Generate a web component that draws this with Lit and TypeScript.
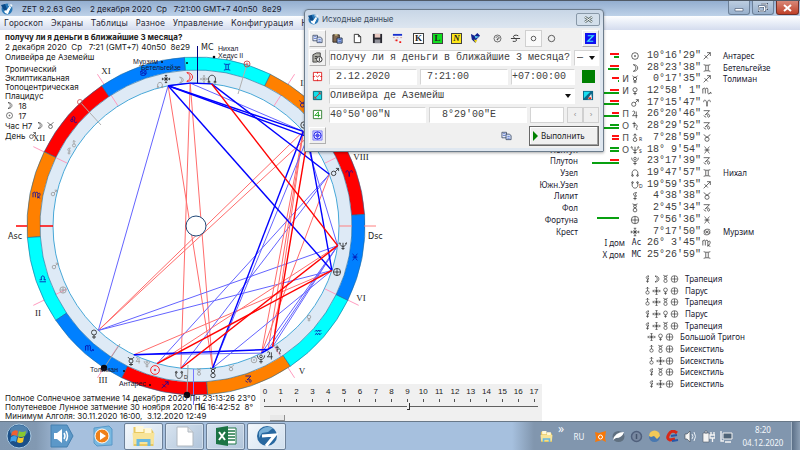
import { LitElement, html, svg, css } from "lit";
import { customElement, state } from "lit/decorators.js";

/* ---------- glyphs, each drawn around 0,0 in a 10 by 10 box ---------- */
const G: Record<string, string> = {
  sun: "M-4 0a4 4 0 1 0 8 0a4 4 0 1 0-8 0M-.7 0a.7.7 0 1 0 1.4 0a.7.7 0 1 0-1.4 0",
  moon: "M-2-4C5-4 5 4-2 4C2 2 2-2-2-4Z",
  mercury: "M-2 0a2 2 0 1 0 4 0a2 2 0 1 0-4 0M-3-4C-2-1.5 2-1.5 3-4M0 2V5M-2 3.5H2",
  venus: "M-2.5-1.5a2.5 2.5 0 1 0 5 0a2.5 2.5 0 1 0-5 0M0 1V5M-2 3H2",
  mars: "M-4 1.5a2.5 2.5 0 1 0 5 0a2.5 2.5 0 1 0-5 0M.3-.3L4-4M1-4H4V-1",
  jupiter: "M-3-3C0-5 1-1-3 2H3M1.5-3V5",
  saturn: "M-3-3H1M-1-5V2M-1 0C2-3 4 0 2 2C1 4 2 5 3 4",
  uranus: "M-2.2 2a2.2 2.2 0 1 0 4.4 0a2.2 2.2 0 1 0-4.4 0M0 0V-5M-2-3L0-5L2-3",
  neptune: "M-4-4C-4 2 4 2 4-4M0-4V5M-2 3H2M-5-3L-4-4L-3-3M3-3L4-4L5-3",
  pluto: "M-1.5-3a1.5 1.5 0 1 0 3 0a1.5 1.5 0 1 0-3 0M-4-4C-4 2 4 2 4-4M0 .5V5M-2 3H2",
  node: "M-3 3C-6-6 6-6 3 3M-4 3a1 1 0 1 0 2 0a1 1 0 1 0-2 0M2 3a1 1 0 1 0 2 0a1 1 0 1 0-2 0",
  snode: "M-3-3C-6 6 6 6 3-3M-4-3a1 1 0 1 0 2 0a1 1 0 1 0-2 0M2-3a1 1 0 1 0 2 0a1 1 0 1 0-2 0",
  lilith: "M2-4C-3-5-3 1 2 0C0-1 0-3 2-4ZM0 0V5M-2 3H2",
  fol: "M-2.2 2.5a2.2 2.2 0 1 0 4.4 0a2.2 2.2 0 1 0-4.4 0M-1.7-2a1.7 1.7 0 1 0 3.4 0a1.7 1.7 0 1 0-3.4 0M-3-5L0-3.6L3-5",
  fortune: "M-4.500 0a4.500 4.500 0 1 0 9 0a4.500 4.500 0 1 0-9 0M-4 0H4M0-4V4",
  cross: "M-4.500 0H4.500M0-4.500V4.500M-1.500-4.500H1.500M-1.500 4.500H1.500M-4.500-1.500V1.500M4.500-1.500V1.500M-2-2L2 2M2-2L-2 2",
  aries: "M-4-1C-4-5 0-5 0 4C0-5 4-5 4-1",
  taurus: "M-2.5 1.5a2.5 2.5 0 1 0 5 0a2.5 2.5 0 1 0-5 0M-4-4C-2-4-2-1 0-1S2-4 4-4",
  gemini: "M-4-4C-2-3 2-3 4-4M-4 4C-2 3 2 3 4 4M-1.5-3V3M1.5-3V3",
  cancer: "M-4-1C-2-4 2-4 4-2M-3.5 0a1.5 1.5 0 1 0 3 0a1.5 1.5 0 1 0-3 0M4 1C2 4-2 4-4 2M.5 0a1.5 1.5 0 1 0 3 0a1.5 1.5 0 1 0-3 0",
  leo: "M-4 1a1.5 1.5 0 1 0 3 0a1.5 1.5 0 1 0-3 0M-1.5 0C-4-5 3-5 1 0C0 3 1 5 4 3",
  virgo: "M-5-3V3M-5-2C-4-4-2-4-2-2V3M-2-2C-1-4 1-4 1-2V3L4 4M1-1C5-5 5 2 0 4",
  libra: "M-4 4H4M-4 1.5H-1.5C-4-5 4-5 1.5 1.5H4",
  scorpio: "M-5-3V3M-5-2C-4-4-2-4-2-2V3M-2-2C-1-4 1-4 1-2V2C1 4 3 4 4 2M3 2.5L4.5 1.5L5 3.5",
  sagittarius: "M-4 4L4-4M0-4H4V0M-3-1L1 3",
  capricorn: "M-4-4H3L-2 1C0-1 4 0 3 3C2 5 0 3 1 1M-4 2L-1 4",
  aquarius: "M-4-1L-2-3L-1-1L1-3L2-1L4-3M-4 3L-2 1L-1 3L1 1L2 3L4 1",
  pisces: "M-3-4C0-2 0 2-3 4M3-4C0-2 0 2 3 4M-3 0H3",
};

const glyph = (name: string, x: number, y: number, color = "#222", size = 1) =>
  svg`<path d=${G[name]} fill="none" stroke=${color} stroke-width=${0.8 / size}
    transform="translate(${x} ${y}) scale(${size})"/>`;

const glyphIcon = (name: string) =>
  html`<svg class="g" viewBox="-6 -6 12 12" aria-hidden="true">${glyph(name, 0, 0)}</svg>`;

/* ---------- chart geometry ---------- */
const CX = 196, CY = 196, ASC = 176.06;
const R_OUT = 169, R_BAND = 156, R_IN = 143;
const at = (lon: number, r: number): [number, number] => {
  const a = ((lon - ASC) * Math.PI) / 180;
  return [CX - r * Math.cos(a), CY + r * Math.sin(a)];
};
const SIGNS = ["aries", "taurus", "gemini", "cancer", "leo", "virgo", "libra", "scorpio",
  "sagittarius", "capricorn", "aquarius", "pisces"];
const ELEMENTS = ["#ff0000", "#ff8000", "#00ffff", "#0080ff"];
const LON: Record<string, number> = {
  sun: 250.27, moon: 88.39, mercury: 240.29, venus: 222.97, mars: 17.26, jupiter: 296.35,
  saturn: 298.5, uranus: 37.48, neptune: 348.17, pluto: 293.29, node: 79.8, snode: 259.99,
  lilith: 34.64, fol: 272.76, fortune: 337.94, cross: 97.3,
};
/* aspect kinds: B/b blue strong/weak, R/r red strong/weak */
const ASPECTS: [string, string, string][] = [
  ["b", "cross", "venus"], ["r", "cross", "fol"], ["r", "moon", "fol"], ["r", "moon", "snode"],
  ["b", "moon", "uranus"], ["r", "venus", "uranus"], ["r", "venus", "lilith"],
  ["b", "mars", "sun"], ["b", "mars", "snode"], ["r", "mars", "pluto"],
  ["b", "neptune", "venus"], ["b", "fortune", "venus"], ["r", "neptune", "sun"],
  ["r", "fortune", "mercury"], ["r", "uranus", "jupiter"], ["r", "uranus", "saturn"],
  ["r", "uranus", "pluto"], ["b", "uranus", "neptune"], ["b", "neptune", "jupiter"],
  ["b", "neptune", "saturn"], ["b", "neptune", "pluto"], ["b", "fortune", "fol"],
  ["b", "mercury", "pluto"], ["b", "lilith", "fol"],
  ["B", "cross", "moon"], ["B", "moon", "node"], ["B", "cross", "uranus"], ["B", "cross", "lilith"],
  ["B", "cross", "fortune"], ["B", "node", "mars"], ["B", "uranus", "fol"],
  ["B", "lilith", "fortune"], ["B", "mercury", "jupiter"], ["B", "pluto", "saturn"],
  ["R", "node", "neptune"], ["R", "neptune", "snode"], ["R", "fortune", "sun"],
  ["R", "lilith", "saturn"],
];
const STROKE: Record<string, [string, number]> = {
  B: ["#0000ff", 1.4], b: ["#6464ff", 1], R: ["#ff0000", 1.4], r: ["#ff6c6c", 1],
};
const PLANETS: [string, number, number, string, number][] = [
  ["cross", 166, 49, "#222", 0.8], ["moon", 189, 47, "#ff0000", 1.1], ["node", 212, 49, "#222", 1],
  ["venus", 94, 304, "#222", 1], ["mercury", 131, 331, "#222", 1], ["sun", 155, 340, "#ff0000", 1.1],
  ["snode", 179, 345, "#222", 0.9], ["fol", 213, 343, "#222", 1], ["pluto", 261, 329, "#222", 0.9],
  ["jupiter", 270, 325, "#222", 0.9], ["saturn", 278, 320, "#222", 0.9], ["mars", 335, 142, "#222", 0.9],
  ["neptune", 343, 216, "#222", 0.8], ["fortune", 337, 242, "#222", 0.8], ["sun", 304, 95, "#222", 0.8],
];
const TRANSITS: [string, number, number][] = [
  ["node", 160, 55], ["moon", 181, 50], ["cross", 204, 49], ["uranus", 74, 114], ["lilith", 69, 121],
  ["mars", 54, 163], ["mars", 55, 236], ["fortune", 63, 260], ["jupiter", 138, 330], ["pluto", 147, 334],
  ["sun", 254, 330], ["fol", 199, 342], ["taurus", 231, 338], ["venus", 309, 288],
];
const HOUSES: [number, string, number, number][] = [
  [-57, "XI", 106, 44], [-26, "XII", 39, 111], [26, "II", 38, 286], [57, "III", 103, 353],
  [123, "V", 302, 344], [154, "VI", 361, 271], [-154, "VIII", 361, 130], [-123, "IX", 305, 56],
];

const sector = (i: number) => {
  const p = (l: number, r: number) => at(l, r).map((n) => n.toFixed(2)).join(" ");
  const a = i * 30, b = a + 30;
  return `M${p(a, R_OUT)}A${R_OUT} ${R_OUT} 0 0 0 ${p(b, R_OUT)}L${p(b, R_BAND)}A${R_BAND} ${R_BAND} 0 0 1 ${p(a, R_BAND)}Z`;
};

@customElement("zodiac-wheel")
class ZodiacWheel extends LitElement {
  static styles = css`
    :host { display: block; }
    .wheel { display: block; width: 400px; height: 391px; }
    .star { font: 7px "Liberation Sans", Arial, sans-serif; fill: #181830; }
    .house { font: 9px "Liberation Serif", serif; fill: #222; text-anchor: middle; }
    .angle { font: 8px "DejaVu Sans", Verdana, sans-serif; fill: #222; }
    .retro { font: 5px "Liberation Sans", sans-serif; fill: #222; }
  `;

  render() {
    const line = (x1: number, y1: number, x2: number, y2: number, c: string, w = 1) =>
      svg`<line x1=${x1} y1=${y1} x2=${x2} y2=${y2} stroke=${c} stroke-width=${w}/>`;
    return html`<svg class="wheel" viewBox="0 0 400 391" role="img" aria-label="Гороскоп">
      <circle cx=${CX} cy=${CY} r="149.5" fill="none" stroke="#deeaf6" stroke-width="13"/>
      ${HOUSES.map(([d]) => {
        const [x1, y1] = at(ASC + d, 181), [x2, y2] = at(ASC + d, R_IN);
        return line(x1, y1, x2, y2, "#ff9cc0");
      })}
      ${SIGNS.map((_, i) => svg`<path d=${sector(i)} fill=${ELEMENTS[i % 4]} stroke="#206898" stroke-width="0.6"/>`)}
      <circle cx=${CX} cy=${CY} r=${R_IN} fill="none" stroke="#48a8d8"/>
      ${SIGNS.map((s, i) => { const [x, y] = at(i * 30 + 15, 162); return glyph(s, x, y, "#0808a8", 0.8); })}
      ${line(16, 196, 27, 196, "#ff0000", 1.5)}${line(40, 196, 53, 196, "#ff0000", 1.5)}
      ${line(339, 196, 352, 196, "#ff8080")}${line(364, 196, 376, 196, "#ff8080")}
      ${line(197.5, 16, 197.5, 53, "#000080")}${line(193.5, 339, 193.5, 375, "#7878ff")}
      ${line(247, 34, 238, 64, "#b0b0b0")}${line(80, 72, 101, 95, "#b0b0b0")}
      ${line(120, 314, 104, 338, "#a0a0a0")}${line(188, 335, 187, 365, "#a0a0a0")}
      ${ASPECTS.map(([k, a, b]) => {
        const [x1, y1] = at(LON[a], R_IN), [x2, y2] = at(LON[b], R_IN);
        return line(x1, y1, x2, y2, ...STROKE[k]);
      })}
      <circle cx=${CX} cy=${CY} r="10" fill="#fff" stroke="#204878"/>
      ${TRANSITS.map(([n, x, y]) => glyph(n, x, y, "#989898", 0.7))}
      ${PLANETS.map(([n, x, y, c, s]) => glyph(n, x, y, c, s))}
      <circle cx="247" cy="34" r="3" fill="none" stroke="#c83030" stroke-width="0.8"/>
      <circle cx="247" cy="34" r="1" fill="none" stroke="#c83030" stroke-width="0.6"/>
      <circle cx="80" cy="72" r="2.5" fill="none" stroke="#c83030" stroke-width="0.7"/>
      ${[[162, 32, 1], [187, 33, 1], [214, 27, 1.3], [124, 341, 1], [150, 355, 1], [104, 338, 3.2], [187, 365, 3.2]]
        .map(([x, y, r]) => svg`<circle cx=${x} cy=${y} r=${r} fill="#080810"/>`)}
      <text class="star" x="133" y="34">Мурзим</text>
      <text class="star" x="141" y="40">Бетельгейзе</text>
      <text class="star" x="218" y="21">Нихал</text>
      <text class="star" x="218" y="28">Хедус II</text>
      <text class="star" x="90" y="342">Толиман</text>
      <text class="star" x="119" y="356">Антарес</text>
      ${HOUSES.map(([, t, x, y]) => svg`<text class="house" x=${x} y=${y}>${t}</text>`)}
      <text class="angle" x="8" y="209">Asc</text>
      <text class="angle" x="368" y="209">Dsc</text>
      <text class="angle" x="201" y="20">MC</text>
      <text class="angle" x="198" y="380">IC</text>
      <text class="retro" x="184" y="349">D</text>
    </svg>`;
  }
}

/* ---------- planet table ---------- */
type Bar = [string, number];
interface Row { name: string; g?: string; mark?: string; sub?: string; deg: string; sign: string; star?: string; bars?: [Bar, Bar]; dig?: string; }
const r = (n: number): Bar => ["red", n];
const g = (n: number): Bar => ["green", n];
const ROWS: Row[] = [
  { name: "Солнце", g: "sun", deg: `10°16'29"`, sign: "sagittarius", star: "Антарес", bars: [r(9), g(5)] },
  { name: "Луна", g: "moon", deg: `28°23'38"`, sign: "gemini", star: "Бетельгейзе", bars: [r(9), g(11)] },
  { name: "Меркурий", g: "mercury", deg: `0°17'35"`, sign: "sagittarius", star: "Толиман", bars: [r(7), g(1)], dig: "И" },
  { name: "Венера", g: "venus", deg: `12°58' 1"`, sign: "scorpio", bars: [r(9), g(20)], dig: "И" },
  { name: "Марс", g: "mars", deg: `17°15'47"`, sign: "aries", bars: [r(9), g(20)] },
  { name: "Юпитер", g: "jupiter", deg: `26°20'46"`, sign: "capricorn", bars: [r(7), g(20)], dig: "П" },
  { name: "Сатурн", g: "saturn", deg: `28°29'52"`, sign: "capricorn", bars: [g(9), g(20)], dig: "О" },
  { name: "Уран", g: "uranus", sub: "R", deg: `7°28'59"`, sign: "taurus", bars: [r(7), r(7)], dig: "П" },
  { name: "Нептун", g: "neptune", sub: "S", deg: `18° 9'54"`, sign: "pisces", bars: [g(9), g(9)], dig: "О" },
  { name: "Плутон", g: "pluto", deg: `23°17'39"`, sign: "capricorn", bars: [r(9), g(27)] },
  { name: "Узел", g: "node", deg: `19°47'57"`, sign: "gemini", star: "Нихал" },
  { name: "Южн.Узел", g: "snode", sub: "D", deg: `19°59'35"`, sign: "sagittarius" },
  { name: "Лилит", g: "lilith", deg: `4°38'38"`, sign: "taurus" },
  { name: "Фол", g: "fol", deg: `2°45'34"`, sign: "capricorn" },
  { name: "Фортуна", g: "fortune", deg: `7°56'36"`, sign: "pisces", bars: [g(22), g(0)] },
  { name: "Крест", g: "cross", deg: `7°17'50"`, sign: "cancer", star: "Мурзим" },
  { name: "I дом", mark: "Ac", deg: `26° 3'45"`, sign: "virgo" },
  { name: "X дом", mark: "MC", deg: `25°26'59"`, sign: "gemini" },
];
const FIGURES: [string[], string][] = [
  [["lilith", "moon", "fol", "fortune"], "Трапеция"],
  [["uranus", "cross", "venus", "fortune"], "Парус"],
  [["uranus", "cross", "fol", "fortune"], "Трапеция"],
  [["lilith", "cross", "venus", "fortune"], "Парус"],
  [["lilith", "cross", "fol", "fortune"], "Трапеция"],
  [["cross", "venus", "fortune"], "Большой Тригон"],
  [["uranus", "fol", "fortune"], "Бисекстиль"],
  [["uranus", "cross", "fortune"], "Бисекстиль"],
  [["lilith", "fol", "fortune"], "Бисекстиль"],
  [["lilith", "cross", "fortune"], "Бисекстиль"],
];

@customElement("planet-table")
class PlanetTable extends LitElement {
  static styles = css`
    :host { display: block; font: 8px/10px "Noto Sans", Tahoma, sans-serif; color: #202030; }
    table { border-collapse: collapse; table-layout: fixed; width: 272px; height: 211px; }
    th, td { padding: 0; font-weight: normal; text-align: right; white-space: nowrap; vertical-align: middle; line-height: 10px; }
    .c-name { width: 50px; } .c-bars { width: 41px; } .c-dig { width: 10px; }
    .c-glyph { width: 15px; } .c-deg { width: 57px; } .c-sign { width: 14px; }
    .house { padding-right: 4px; }
    .bars { display: flex; flex-direction: column; align-items: flex-end; gap: 1px; }
    .bar { height: 2px; }
    .bar.red { background: #ff1010; }
    .bar.green { background: #08a010; }
    .dig { font: 9px/10px "DejaVu Sans", sans-serif; color: #505050; }
    .mark { font: 8px/10px "DejaVu Sans Mono", monospace; text-align: center; }
    .cell { display: flex; align-items: center; padding-left: 1px; }
    .sub { font-size: 5px; margin: 3px 0 0 -1px; line-height: 5px; }
    .deg { font: 10px/10px "Liberation Mono", monospace; white-space: pre; color: #404040; }
    .star { text-align: left; padding-left: 8px; }
    .g { width: 10px; height: 10px; display: block; flex: none; }
    .figures { list-style: none; margin: 12px 0 0; padding: 0 0 0 115px; display: grid; grid-auto-rows: 1fr; height: 117px; }
    .figures .g { width: 9px; }
    .figure { display: flex; align-items: center; }
    .figure.three { padding-left: 4px; }
    .label { padding-left: 6px; white-space: nowrap; }
  `;

  render() {
    return html`
      <table>
        <colgroup><col class="c-name"><col class="c-bars"><col class="c-dig"><col class="c-glyph"><col class="c-deg"><col class="c-sign"><col></colgroup>
        <tbody>
          ${ROWS.map((p) => html`<tr>
            ${p.mark ? html`<th class="house" scope="row" colspan="3">${p.name}</th>` : html`
              <th scope="row">${p.name}</th>
              <td><div class="bars">${(p.bars ?? []).map(([c, w]) => html`<div class="bar ${c}" style="width:${w}px"></div>`)}</div></td>
              <td class="dig">${p.dig}</td>`}
            <td>${p.mark ? html`<div class="mark">${p.mark}</div>` : html`<div class="cell">${glyphIcon(p.g!)}${p.sub ? html`<span class="sub">${p.sub}</span>` : ""}</div>`}</td>
            <td class="deg">${p.deg}</td>
            <td><div class="cell">${glyphIcon(p.sign)}</div></td>
            <td class="star">${p.star}</td>
          </tr>`)}
        </tbody>
      </table>
      <ul class="figures">
        ${FIGURES.map(([gs, t]) => html`<li class="figure ${gs.length === 3 ? "three" : ""}">${gs.map(glyphIcon)}<span class="label">${t}</span></li>`)}
      </ul>`;
  }
}

/* ---------- pictures for the dialog and the taskbar ---------- */
const logo = html`<svg class="ico" viewBox="0 0 12 12" aria-hidden="true"><circle cx="6" cy="6" r="5.5" fill="#2878b8"/><path d="M1 3L5 8L10 1L7 11L4 10Z" fill="#fff"/><path d="M0 2L4 1L6 6L3 8Z" fill="#0c4a88"/><path d="M7 2H11L6 11" fill="none" stroke="#fff"/></svg>`;
const ic = (body: unknown) => html`<svg class="ico" viewBox="0 0 12 12" aria-hidden="true">${body}</svg>`;
const I = {
  copy: ic(svg`<path d="M1 2.500H6V8.500H1Z" fill="#e8eef8" stroke="#283858" stroke-width=".8"/><path d="M2 4H5M2 6H5" stroke="#3050c0" stroke-width=".7"/><path d="M5.500 4.500H9L11 6V10.500H5.500Z" fill="#d8e4f8" stroke="#283858" stroke-width=".8"/><path d="M7 7H9.500M7 9H9.500" stroke="#3050c0" stroke-width=".7"/>`),
  paste: ic(svg`<path d="M1 2H8V10H1Z" fill="#806850" stroke="#302820"/><path d="M3 1H6V3H3Z" fill="#c0b080"/><path d="M5.500 5.500H11V11H5.500Z" fill="#b0c8f0" stroke="#182848"/><path d="M7 7H10M7 9H10" stroke="#3050c0"/>`),
  page: ic(svg`<path d="M2.500 1.500H7L9.500 4V10.500H2.500ZM7 1.500V4H9.500" fill="#fff" stroke="#303030"/>`),
  save: ic(svg`<path d="M1 1H11V11H1Z" fill="#282830"/><path d="M3 1H9V5H3Z" fill="#e8c8c0"/><path d="M3 7H9V11H3Z" fill="#909098"/>`),
  cal: ic(svg`<path d="M1 2H11" stroke="#1830d0" stroke-width="2"/><path d="M1 5H3M5 5H7M9 5H11M3 8H5" stroke="#d0a0a0"/><path d="M4 7H6V9H4ZM8 9H10V11H8Z" fill="#f01818"/>`),
  doc: ic(svg`<path d="M1 3L5 1H9V9L5 11H1Z" fill="#b0b0a8" stroke="#404040"/><circle cx="8" cy="8" r="3" fill="#fff" stroke="#202020"/><path d="M8 6V10" stroke="#202020"/><path d="M3 5H6M3 7H5" stroke="#303030"/>`),
  date: ic(svg`<path d="M1.500 1.500H10.500V10.500H1.500Z" fill="#fff" stroke="#e02020"/><path d="M6 1V3M6 9V11M1 6H3M9 6H11M4 5L6 6.500L8.500 4.500" stroke="#e02020" fill="none"/>`),
  geo: ic(svg`<path d="M1.500 1.500H10.500V10.500H1.500Z" fill="#10e0e8" stroke="#086070"/><path d="M3 9L9 3M3 7V9H5M7 3H9V5" stroke="#d03030" fill="none"/>`),
  coord: ic(svg`<path d="M1.500 1.500H10.500V10.500H1.500Z" fill="#fff" stroke="#308030"/><path d="M3 7L7 3V9M3 7H9" stroke="#18a018" fill="none"/>`),
  map: ic(svg`<path d="M0 1H11V11H0Z" fill="#0c6888"/><path d="M1 2H8L1 9Z" fill="#18e0f0"/><path d="M5 10L9 4L10 10Z" fill="#f0f0f0"/><path d="M6 8H9V10H6Z" fill="#e02818"/>`),
  wheel: ic(svg`<path d="M1 1H11V11H1Z" fill="#d8d8ff" stroke="#5050f8" stroke-width=".7"/><circle cx="6" cy="6" r="4" fill="none" stroke="#2020e8"/><circle cx="6" cy="6" r="1.500" fill="none" stroke="#2020e8"/><path d="M2 6H10M6 2V10" stroke="#2020e8" stroke-width=".5"/>`),
  bird: ic(svg`<path d="M1 1L5 3L8 0L11 3L7 7L6 11L2 7Z" fill="#102090"/><path d="M5 3L10 4L6 6Z" fill="#58c8e8"/><path d="M4 7L6 11L8 8Z" fill="#e8d018"/>`),
  r1: ic(svg`<circle cx="6" cy="6" r="3.800" fill="none" stroke="#404040" stroke-width=".8"/><path d="M4 5Q6 3 8 5Q8 7 5 7M6 6V8" fill="none" stroke="#404040" stroke-width=".8"/>`),
  r2: ic(svg`<path d="M9 3C5 1 2 4 5 5.500S8 10 3 9M1 6H11" fill="none" stroke="#303030"/>`),
  r3: ic(svg`<circle cx="6" cy="6" r="2.500" fill="none" stroke="#505050"/>`),
  r4: ic(svg`<circle cx="6" cy="6" r="3.500" fill="none" stroke="#505050"/>`),
  z: ic(svg`<path d="M0 0H12V12H0Z" fill="#1010f0"/><path d="M3 3H9L3 9H9" fill="none" stroke="#40e8f8" stroke-width="1.300"/>`),
};

@customElement("source-dialog")
class SourceDialog extends LitElement {
  static styles = css`
    :host { display: block; box-sizing: border-box; border: 1px solid #6c7c8c; border-radius: 4px 4px 1px 1px;
      background: linear-gradient(#c8d6e6, #dde6f0 18px, #dfe7f0); padding: 0 3px 3px; box-shadow: 0 1px 3px #0005;
      font: 8px/10px "Liberation Sans", Arial, sans-serif; color: #202020; }
    .bar { display: flex; align-items: center; height: 18px; gap: 3px; font: 8px/12px Inter, sans-serif; color: #3c4c60; }
    .ico { display: block; width: 11px; height: 11px; flex: none; }
    button, input, select { font: inherit; color: inherit; margin: 0; padding: 0; box-sizing: border-box; border-radius: 0; min-width: 0; }
    .close { margin-left: auto; width: 24px; height: 13px; border: 1px solid #8898a8; border-radius: 2px; background: #d3dfeb; display: grid; place-items: center; }
    .face { background: #f0f0f0; padding: 1px 1px 2px; display: flex; flex-direction: column; gap: 2px; }
    .row { display: flex; align-items: center; gap: 3px; height: 17px; }
    .tools { height: 18px; }
    .set { display: flex; gap: 3px; }
    .mid { gap: 2px; padding-left: 1px; }
    .tight { gap: 1px; padding-left: 2px; }
    .last { margin-left: auto; }
    .tool { border: 0; background: none; width: 17px; height: 17px; display: grid; place-items: center; flex: none; }
    .raised { border: 1px solid; border-color: #fff #b0b0b0 #b0b0b0 #fff; }
    .on { background: #fafafa; border: 1px solid #d0d0d0; }
    .letter { width: 11px; height: 11px; box-sizing: border-box; font: bold 9px/9px "Liberation Serif", serif; border: 1px solid #404040; text-align: center; }
    .k { background: #fff; } .l { background: #10e020; } .n { background: #ffe818; font-style: italic; }
    .field { border: 1px solid; border-color: #d4d4d4 #fff #fff #d4d4d4; background: #fff; height: 16px; flex: 1 1 0; padding: 0;
      font: 10px/14px "Liberation Mono", monospace; color: #404040; outline: 0; white-space: pre; }
    .combo { position: relative; display: flex; flex: 1 1 0; }
    .combo::after { content: ""; position: absolute; right: 4px; top: 6px; border: 3px solid transparent; border-top: 4px solid #101010; border-bottom: 0; pointer-events: none; }
    .sheet { appearance: none; }
    .kind { padding-left: 2px; }
    .wide { flex: 0 0 242px; }
    .lat { flex: 0 0 97px; }
    .slim { flex: 0 0 34px; border-color: #d4d4d4; }
    .zone { flex: 0 0 64px; }
    .end { flex: 0 0 21px; display: grid; place-items: center; }
    .swatch { width: 13px; height: 13px; background: #008000; border: 0; }
    .steps { display: flex; }
    .step { width: 16px; height: 16px; border: 1px solid #d0d0d0; background: #f0f0f0; color: #909090; }
    .foot { height: 21px; gap: 14px; }
    .second { margin-left: auto; }
    .run { display: flex; align-items: center; gap: 3px; width: 70px; height: 20px; padding: 0 3px;
      border: 1px solid #686868; box-shadow: inset -1px -1px #a0a0a0, inset 1px 1px #fff; background: #f0f0f0; font: 8px/10px "Noto Sans", sans-serif; }
    .play { width: 0; height: 0; border: 5px solid transparent; border-left-color: #008000; border-right: 0; }
  `;

  render() {
    const tool = (label: string, body: unknown, cls = "") =>
      html`<button class="tool ${cls}" aria-label=${label}>${body}</button>`;
    return html`
      <div class="bar">${logo}<span>Исходные данные</span>
        <button class="close" aria-label="Закрыть"><svg width="9" height="7" viewBox="0 0 9 7"><path d="M1 1L8 6M8 1L1 6" stroke="#566" stroke-width="2.400"/><path d="M1 1L8 6M8 1L1 6" stroke="#fff"/></svg></button>
      </div>
      <div class="face">
        <div class="row tools">
          <div class="set">${tool("Копировать", I.copy, "raised")}${tool("Вставить", I.paste)}${tool("Новый", I.page)}${tool("Сохранить", I.save)}${tool("Календарь", I.cal)}</div>
          <div class="set mid">${tool("K", html`<span class="letter k">K</span>`)}${tool("L", html`<span class="letter l">L</span>`)}${tool("N", html`<span class="letter n">N</span>`)}${tool("Атлас", I.bird)}</div>
          <div class="set tight">${tool("Режим 1", I.r1)}${tool("Режим 2", I.r2)}${tool("Режим 3", I.r3, "on")}${tool("Режим 4", I.r4)}</div>
          <div class="set last">${tool("ZET", I.z, "raised")}</div>
        </div>
        <div class="row">
          ${tool("Список", I.doc, "raised")}
          <input class="field wide" aria-label="Название" value="получу ли я деньги в ближайшие 3 месяца?">
          <span class="combo"><select class="field sheet kind" aria-label="Пол"><option>—</option></select></span>
        </div>
        <div class="row">
          ${tool("Дата", I.date)}
          <input class="field" aria-label="Дата" value=" 2.12.2020">
          <input class="field" aria-label="Время" value=" 7:21:00">
          <input class="field zone" aria-label="Пояс" value="+07:00:00">
          <span class="end"><button class="swatch" aria-label="Цвет"></button></span>
        </div>
        <div class="row">
          ${tool("Город", I.geo)}
          <span class="combo"><select class="field sheet" aria-label="Место"><option>Оливейра де Аземейш</option></select></span>
          <span class="end">${I.map}</span>
        </div>
        <div class="row">
          ${tool("Координаты", I.coord)}
          <input class="field lat" aria-label="Широта" value="40°50'00&quot;N">
          <input class="field" aria-label="Долгота" value="  8°29'00&quot;E">
          <input class="field slim" aria-label="Высота">
          <span class="steps"><button class="step" aria-label="Назад">‹</button><button class="step" aria-label="Вперёд">›</button></span>
        </div>
        <div class="row foot">
          ${tool("Карта", I.wheel, "raised")}
          ${tool("Копировать данные", I.copy, "second")}
          <button class="run"><span class="play"></span>Выполнить</button>
        </div>
      </div>`;
  }
}

/* ---------- taskbar ---------- */
const folder = svg`<path d="M2 3H9L11 5H20L22 8V22H2Z" fill="#e8c860"/><path d="M4 2H12V8H4ZM13 4H20V10H13Z" fill="#fff8d8"/><path d="M1 9H23L22 20H2Z" fill="#f8e498"/><path d="M5 22V15H19V22H16V18H8V22Z" fill="#68b8e0"/>`;

@customElement("task-bar")
class TaskBar extends LitElement {
  static styles = css`
    :host { display: flex; align-items: center; height: 29px; box-sizing: border-box; border-top: 1px solid #687888;
      background: linear-gradient(90deg, #8097b0, #8299b2 36px, #a6c0de 66px, #a6c0de calc(100% - 288px), #8196ae calc(100% - 266px), #8196ae);
      color: #f4f8fc; font: 8px/13px "Noto Sans", "Open Sans", sans-serif; }
    button { border: 0; background: none; padding: 0; margin: 0; display: grid; place-items: center; color: inherit; font: inherit; }
    .orb { width: 38px; height: 28px; margin-right: 4px; }
    .app { width: 39px; height: 27px; margin-right: 2px; box-sizing: border-box; flex: none; }
    .open { border: 1px solid #6c8098; border-radius: 2px; background: linear-gradient(135deg, #d8e4f0, #b0c4da); box-shadow: inset 0 0 0 1px #e4eef888; }
    .active { background: linear-gradient(135deg, #f4f8fc, #d0dfee); }
    .tray { margin-left: auto; display: flex; align-items: center; height: 100%; }
    .small { width: 18px; }
    .lang { width: 24px; text-align: center; }
    .clock { width: 56px; text-align: center; }
    .peek { width: 9px; height: 28px; background: linear-gradient(90deg, #5c7088, #8c9fb4); border-left: 1px solid #a8b8c8; }
    .more { width: 12px; align-self: flex-start; font-size: 12px; text-align: center; }
  `;

  render() {
    const t = (label: string, body: unknown) => html`<button class="small" aria-label=${label}><svg width="13" height="13" viewBox="0 0 13 13">${body}</svg></button>`;
    return html`
      <button class="orb" aria-label="Пуск"><svg width="26" height="26" viewBox="0 0 26 26">
        <circle cx="13" cy="13" r="12" fill="#1c5088" stroke="#a8c8e0"/><ellipse cx="13" cy="8" rx="9" ry="6" fill="#6898c0" opacity=".7"/>
        <path d="M6 9Q9 6 12 8L11 13Q8 11 5 13Z" fill="#f06030"/><path d="M13 8Q16 10 20 8L19 13Q15 15 12 13Z" fill="#88c830"/>
        <path d="M5 14Q8 12 11 14L10 19Q7 17 4 19Z" fill="#40a0e8"/><path d="M12 14Q15 16 18 14L17 19Q14 21 11 19Z" fill="#f8c828"/></svg></button>
      <button class="app" aria-label="Звук"><svg width="24" height="24" viewBox="0 0 24 24"><path d="M1 1H17L23 12L17 23H1Z" fill="#5c98c8" stroke="#4480b0"/><path d="M4 9H7L12 5V19L7 15H4Z" fill="#fff"/><path d="M14 9Q16 12 14 15M16 7Q19 12 16 17" fill="none" stroke="#fff" stroke-width="1.500"/></svg></button>
      <button class="app" aria-label="Проигрыватель"><svg width="20" height="22" viewBox="0 0 20 22"><path d="M1 3L16 1L19 4V20L4 21L1 18Z" fill="#78b8e0" stroke="#5898c8"/><circle cx="9" cy="11" r="7" fill="#f08018" stroke="#fff"/><path d="M7 7L13 11L7 15Z" fill="#fff"/></svg></button>
      <button class="app open active" aria-label="Проводник"><svg width="25" height="24" viewBox="0 0 24 24">${folder}</svg></button>
      <button class="app open" aria-label="Документ"><svg width="18" height="21" viewBox="0 0 18 21"><path d="M1 1H12L17 6V20H1Z" fill="#fff" stroke="#b0b8c0"/><path d="M12 1V6H17" fill="#e0e4e8" stroke="#b0b8c0"/></svg></button>
      <button class="app open" aria-label="Excel"><svg width="22" height="22" viewBox="0 0 22 22"><path d="M12 3H21V19H12Z" fill="#fff" stroke="#207848"/><path d="M13 6H20M13 9H20M13 12H20M13 15H20" stroke="#207848" stroke-width="1.500"/><path d="M1 3L13 1V21L1 19Z" fill="#1c7444"/><path d="M4 7L10 15M10 7L4 15" stroke="#fff" stroke-width="2"/></svg></button>
      <button class="app open active" aria-label="ZET"><svg width="24" height="24" viewBox="0 0 24 24"><circle cx="12" cy="12" r="10" fill="#2868a0"/><path d="M4 8Q9 1 18 4L13 8L7 9L4 14Z" fill="#78b0d8"/><path d="M7 12L20 11L11 22" fill="none" stroke="#fff" stroke-width="3"/></svg></button>
      <div class="tray">
        <button class="small" aria-label="Папка"><svg width="13" height="13" viewBox="0 0 24 24">${folder}</svg></button>
        <span class="more">»</span>
        <span class="lang">RU</span>
        ${t("Avast", svg`<path d="M1 2L5 3L12 1L11 8L12 12L8 10L1 12L2 8Z" fill="#f87808"/><circle cx="6.500" cy="7" r="2" fill="none" stroke="#fff"/>`)}
        ${t("Перо", svg`<ellipse cx="6.500" cy="6.500" rx="6" ry="5.500" fill="#607080"/><path d="M1 10Q3 2 12 2Q10 8 4 8Z" fill="#fff"/>`)}
        ${t("Сеть", svg`<circle cx="6.500" cy="6.500" r="5" fill="#7888a0" stroke="#50607c" stroke-width="1.500"/><path d="M6.500 4V9" stroke="#44546c" stroke-width="1.500"/>`)}
        ${t("Погода", svg`<circle cx="6.500" cy="6.500" r="5.500" fill="#4878b0"/><path d="M1 6A5.500 5.500 0 0 1 12 6L9 9L6 6L3 7Z" fill="#f0c858"/>`)}
        ${t("CCleaner", svg`<path d="M11 3Q6-1 3 4T4 10L9 9" fill="none" stroke="#d82818" stroke-width="3"/><path d="M5 6L11 5M6 11L12 10" stroke="#2858a8" stroke-width="2"/>`)}
        ${t("Громкость", svg`<path d="M1 4H3L6 1V12L3 9H1Z" fill="#f4f4f4" stroke="#404850" stroke-width=".6"/><path d="M8 4Q10 6.500 8 9M10 2Q13 6.500 10 11" fill="none" stroke="#e8eef4"/>`)}
        ${t("Питание", svg`<path d="M1 3H7V12H1ZM3 1H5V3H3Z" fill="#f4f4f4" stroke="#505c68" stroke-width=".6"/><path d="M9 2V5M12 2V5M8 5H13V8H8ZM10.500 8V12" fill="none" stroke="#f4f4f4" stroke-width="1.300"/>`)}
        ${t("Экран", svg`<path d="M3 3H12V9H3Z" fill="#506478" stroke="#f4f4f4"/><path d="M5 12H11M1 1V11H4" fill="none" stroke="#f4f4f4" stroke-width="1.300"/>`)}
        <div class="clock">8:20<br>04.12.2020</div>
        <button class="peek" aria-label="Показать рабочий стол"></button>
      </div>`;
  }
}

/* ---------- main window ---------- */
@customElement("app-root")
class AppRoot extends LitElement {
  @state() private hour = 9;

  static styles = css`
    :host { display: flex; flex-direction: column; min-height: 100vh; position: relative; overflow: hidden; background: #fff;
      font: 8px/9px Inter, Verdana, sans-serif; color: #202020; }
    .title { display: flex; align-items: center; height: 16px; box-sizing: border-box; border-top: 1px solid #505a66; padding-left: 1px;
      background: linear-gradient(#93aed0, #bdd1e8); font: 8px/12px Inter, sans-serif; color: #182030; white-space: pre; }
    .ico { width: 12px; height: 12px; }
    .name { padding-left: 9px; }
    .controls { margin-left: auto; display: flex; gap: 2px; align-self: flex-start; padding-right: 1px; white-space: normal; }
    .ctl { width: 22px; height: 14px; padding: 0; border: 1px solid #6c8098; border-top: 0; border-radius: 0 0 3px 3px; background: linear-gradient(#bccde0, #98b0cc); display: grid; place-items: center; }
    .ctl.x { background: linear-gradient(#d88878, #c04028); border-color: #703028; width: 23px; }
    .menu { display: flex; height: 14px; padding-left: 4px; gap: 8px; background: linear-gradient(#fdfeff, #e8edf7 50%, #d4dcee); font: 8px/15px "DejaVu Sans", sans-serif; }
    .menu a { color: #282838; text-decoration: none; white-space: nowrap; }
    .main { flex: 1; display: flex; justify-content: space-between; position: relative; }
    .left { flex: 1; min-width: 0; display: flex; flex-direction: column; position: relative; }
    .chart { position: absolute; left: 0; top: 0; }
    .info { position: relative; padding: 3px 5px 0; }
    .info p { margin: 0; white-space: pre; }
    .head { display: grid; grid-auto-rows: 1fr; height: 29px; align-items: center; }
    .opts { display: grid; grid-auto-rows: 1fr; height: 75px; align-items: center; margin-top: 3px; }
    .g { width: 9px; height: 9px; vertical-align: -1px; }
    .bottom { position: relative; margin-top: auto; display: flex; align-items: flex-end; }
    .notes { width: 255px; padding-left: 5px; white-space: pre; flex: none; }
    .notes p { margin: 0; }
    .scale { width: 282px; height: 37px; background: #f0f0f0; overflow: hidden; flex: none; }
    .hours { display: grid; grid-template-columns: repeat(18, 1fr); width: 285px; margin: 3px 0 0 -3px; font: 8px/10px "Liberation Sans", Arial, sans-serif; text-align: center; }
    .hours span::after { content: ""; display: block; width: 1px; height: 3px; margin: 2px auto 0; background: #505050; }
    .range { appearance: none; display: block; width: 274px; height: 8px; margin: 0 0 0 4px; background: linear-gradient(#606060, #606060) center/100% 1px no-repeat; outline: 0; }
    .range::-webkit-slider-thumb { appearance: none; width: 3px; height: 7px; background: #f0f0f0; border: solid #303030; border-width: 0 1px 1px 0; box-sizing: border-box; }
    .nub { width: 14px; height: 5px; margin: 5px 0 0 10px; border: solid #909090; border-width: 0 1px 1px 0; background: #e8e8e8; }
    .data { flex: none; padding-top: 20px; width: 272px; }
    .dialog { position: absolute; left: 304px; top: 9px; width: 300px; }
  `;

  render() {
    return html`
      <header class="title">${logo}<span class="name">ZET 9.2.63 Geo    2 декабря 2020  Ср   7:21:00 GMT+7 40n50  8e29</span>
        <div class="controls">
          <button class="ctl" aria-label="Свернуть"><svg width="10" height="8" viewBox="0 0 10 8"><path d="M1 4.500H9V7H1Z" fill="#fff" stroke="#506078" stroke-width=".7"/></svg></button>
          <button class="ctl" aria-label="Развернуть"><svg width="10" height="9" viewBox="0 0 10 9"><path d="M3.500 1H9V6H7M1 3.500H6.500V8H1Z" fill="none" stroke="#405068" stroke-width="2"/><path d="M3.500 1H9V6H7M1 3.500H6.500V8H1Z" fill="none" stroke="#fff"/></svg></button>
          <button class="ctl x" aria-label="Закрыть"><svg width="9" height="8" viewBox="0 0 9 8"><path d="M1 1L8 7M8 1L1 7" stroke="#fff" stroke-width="2"/></svg></button>
        </div>
      </header>
      <nav class="menu">${["Гороскоп", "Экраны", "Таблицы", "Разное", "Управление", "Конфигурация", "Настройка"].map((m) => html`<a href="#">${m}</a>`)}</nav>
      <main class="main">
        <div class="left">
          <zodiac-wheel class="chart"></zodiac-wheel>
          <div class="info">
            <div class="head"><b>получу ли я деньги в ближайшие 3 месяца?</b><p>2 декабря 2020  Ср   7:21 (GMT+7) 40n50  8e29</p><p>Оливейра де Аземейш</p></div>
            <div class="opts"><p>Тропический</p><p>Эклиптикальная</p><p>Топоцентрическая</p><p>Плацидус</p><p>${glyphIcon("moon")}  18</p><p>${glyphIcon("sun")}  17</p><p>Час H7 ${glyphIcon("moon")} ${glyphIcon("taurus")}</p><p>День ${glyphIcon("mars")}</p></div>
          </div>
          <div class="bottom">
            <div class="notes"><p>Полное Солнечное затмение 14 декабря 2020 Пн 23:13:26 23°0</p><p>Полутеневое Лунное затмение 30 ноября 2020 Пн 16:42:52  8°</p><p>Минимум Алголя: 30.11.2020 16:00,  3.12.2020 12:49</p></div>
            <div class="scale">
              <div class="hours">${Array.from({ length: 18 }, (_, i) => html`<span>${i}</span>`)}</div>
              <input class="range" type="range" min="0" max="17" aria-label="Шкала" .value=${String(this.hour)} @input=${(e: Event) => (this.hour = Number((e.target as HTMLInputElement).value))}>
              <div class="nub"></div>
            </div>
          </div>
        </div>
        <planet-table class="data"></planet-table>
      </main>
      <task-bar></task-bar>
      <source-dialog class="dialog" role="dialog" aria-label="Исходные данные"></source-dialog>`;
  }
}
